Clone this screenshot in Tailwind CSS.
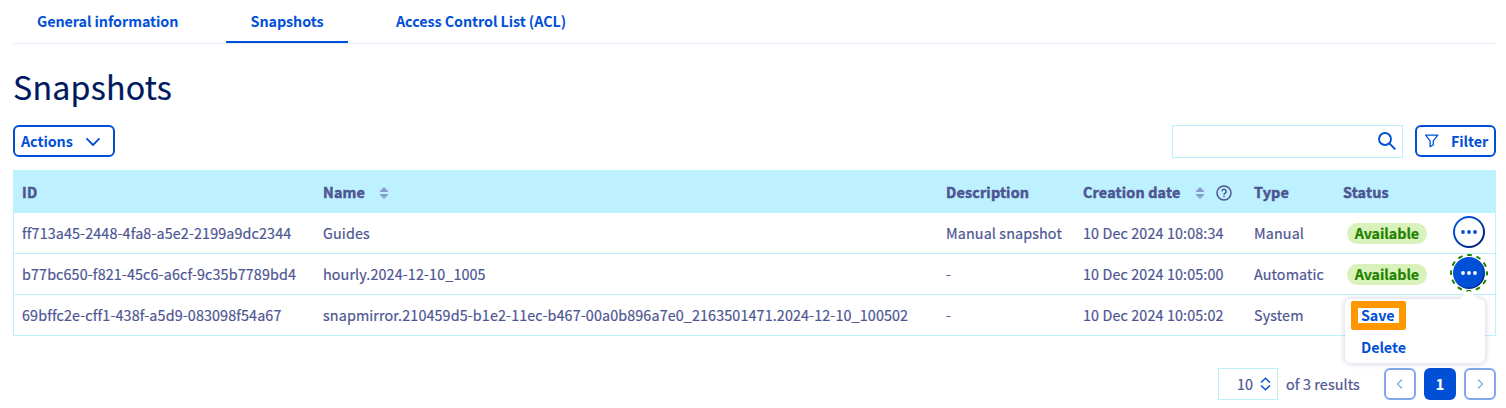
<!DOCTYPE html>
<html lang="en">
<head>
<meta charset="utf-8">
<title>Snapshots</title>
<script src="https://cdn.jsdelivr.net/npm/@tailwindcss/browser@4"></script>
</head>
<body class="relative h-[408px] w-[1506px] overflow-hidden bg-white pl-[13px] pr-[10px] font-['Noto_Sans_CJK_SC','Noto_Sans',sans-serif] text-[14.33px] leading-5 tracking-[0.122px] text-[#4d5592] [-webkit-text-stroke:0.2px]">
  <nav class="flex h-11 border-b border-[#e4f0fb] font-bold tracking-[-0.07px] text-[#0050d7] [-webkit-text-stroke:0px]">
    <a class="flex h-[43px] w-[189px] items-center pb-0.5 pl-6"><span>General information</span></a>
    <a class="ml-6 flex h-[43px] w-[122px] items-center justify-center border-b-2 border-[#0050d7]"><span>Snapshots</span></a>
    <a class="ml-6 flex h-[43px] items-center px-6 pb-0.5"><span>Access Control List (ACL)</span></a>
  </nav>

  <h1 class="mt-[22px] h-10 text-[32.2px] leading-10 tracking-[0.2px] text-[#00185e]">Snapshots</h1>

  <div class="mt-[19px] flex h-[33px] items-start justify-between font-bold tracking-[-0.07px] text-[#0050d7] [-webkit-text-stroke:0px]">
    <button class="flex h-8 w-[102px] items-center rounded-md border-2 border-[#0050d7] pl-1.5">
      <span class="w-[52px] text-left">Actions</span>
      <svg class="ml-3 mt-px h-4 w-4" viewBox="0 0 16 16" fill="none" stroke="currentColor" stroke-width="1.8" stroke-linecap="round" stroke-linejoin="round"><path d="M2 4.800 8 11l6-6.200"/></svg>
    </button>
    <div class="flex gap-3">
      <div class="flex h-[33px] w-[231px] items-center justify-end border border-[#bef1ff] pb-0.5 pr-1.5">
        <svg class="h-[18px] w-[18px]" viewBox="0 0 18 18" fill="none" stroke="currentColor" stroke-width="1.9"><circle cx="7" cy="7" r="6"/><path d="m11.3 11.3 6.1 6.1"/></svg>
      </div>
      <button class="flex h-8 w-[81px] items-center rounded-md border-2 border-[#0050d7] pl-2">
        <svg class="h-3.5 w-3.5" viewBox="0 0 14 14" fill="none" stroke="currentColor" stroke-width="1.3" stroke-linejoin="round"><path d="M.6 1.100h12.200L8.300 6.800v3.900l-3.200 2V6.800Z"/></svg>
        <span class="ml-3">Filter</span>
      </button>
    </div>
  </div>

  <table class="mt-3 w-[1483px] table-fixed border-separate border-spacing-0 text-left">
    <colgroup><col class="w-[302px]"><col class="w-[623px]"><col class="w-[137px]"><col class="w-[171px]"><col class="w-[89px]"><col class="w-[161px]"></colgroup>
    <thead>
      <tr class="h-[43px] bg-[#bef1ff] font-bold tracking-[0.18px] [-webkit-text-stroke:0.5px]">
        <th class="pl-[9px]">ID</th>
        <th class="pl-2"><div class="flex items-center"><span class="w-[41px]">Name</span><svg class="ml-4 mt-0.5 h-3 w-2 text-[#869ccb]" viewBox="0 0 8 12" fill="currentColor"><path d="M4 0 8 4v1H0V4ZM0 7h8v1l-4 4-4-4Z"/></svg></div></th>
        <th class="pl-2">Description</th>
        <th class="pl-2"><div class="flex items-center"><span class="w-[97px] whitespace-nowrap">Creation date</span><svg class="ml-4 mt-0.5 h-3 w-2 text-[#869ccb]" viewBox="0 0 8 12" fill="currentColor"><path d="M4 0 8 4v1H0V4ZM0 7h8v1l-4 4-4-4Z"/></svg><svg class="ml-[11.500px] mt-[3px] h-4 w-4" viewBox="0 0 16 16" fill="none" stroke="currentColor" stroke-width="1.5"><circle cx="8" cy="8" r="7"/><path d="M5.9 6.3a2.1 2.1 0 1 1 3.3 1.8C8.3 8.7 8 9 8 9.7M8 10.8v1.4"/></svg></div></th>
        <th class="pl-2">Type</th>
        <th class="pl-2">Status</th>
      </tr>
    </thead>
    <tbody>
      <tr class="h-[41px]">
        <td class="border-b border-l border-[#bef1ff] pl-2">ff713a45-2448-4fa8-a5e2-2199a9dc2344</td>
        <td class="border-b border-[#bef1ff] pl-2">Guides</td>
        <td class="whitespace-nowrap border-b border-[#bef1ff] pl-2">Manual snapshot</td>
        <td class="whitespace-nowrap border-b border-[#bef1ff] pl-2">10 Dec 2024 10:08:34</td>
        <td class="border-b border-[#bef1ff] pl-2">Manual</td>
        <td class="border-b border-r border-[#bef1ff] py-0 pl-3 pr-2.5">
          <div class="flex h-10 items-start justify-between">
            <span class="mt-2.5 flex h-[21px] w-20 items-center justify-center rounded-full bg-[#d9f1ba] pb-0.5 font-bold tracking-[-0.05px] text-[#1f8300]">Available</span>
            <svg class="mt-[3px] h-8 w-8" viewBox="0 0 32 32"><defs><linearGradient id="ring" x1="0" y1="0" x2="1" y2="1"><stop offset=".25" stop-color="#0050d7"/><stop offset=".85" stop-color="#00237a"/></linearGradient></defs><circle cx="16" cy="16" r="15" fill="#fff" stroke="url(#ring)" stroke-width="2"/><g fill="#0050d7"><circle cx="10" cy="16" r="1.9"/><circle cx="16" cy="16" r="1.9"/><circle cx="22" cy="16" r="1.9"/></g></svg>
          </div>
        </td>
      </tr>
      <tr class="h-[41px]">
        <td class="border-b border-l border-[#bef1ff] pl-2">b77bc650-f821-45c6-a6cf-9c35b7789bd4</td>
        <td class="border-b border-[#bef1ff] pl-2">hourly.2024-12-10_1005</td>
        <td class="border-b border-[#bef1ff] pl-2">-</td>
        <td class="whitespace-nowrap border-b border-[#bef1ff] pl-2">10 Dec 2024 10:05:00</td>
        <td class="border-b border-[#bef1ff] pl-2">Automatic</td>
        <td class="border-b border-r border-[#bef1ff] py-0 pl-3 pr-[7px]">
          <div class="flex h-10 items-start justify-between">
            <span class="mt-2.5 flex h-[21px] w-20 items-center justify-center rounded-full bg-[#d9f1ba] pb-0.5 font-bold tracking-[-0.05px] text-[#1f8300]">Available</span>
            <svg class="h-[38px] w-[38px]" viewBox="0 0 38 38"><defs><linearGradient id="disc" x1="0" y1="0" x2="1" y2="1"><stop offset=".4" stop-color="#0050d7"/><stop offset=".9" stop-color="#00237a"/></linearGradient></defs><circle cx="19" cy="19" r="18" fill="none" stroke="#1f8300" stroke-width="2" stroke-dasharray="4.7 4.725" stroke-dashoffset="2.35"/><circle cx="19" cy="19" r="16" fill="url(#disc)"/><circle cx="19" cy="19" r="14.5" fill="#0050d7"/><g fill="#fff"><circle cx="13" cy="19" r="1.9"/><circle cx="19" cy="19" r="1.9"/><circle cx="25" cy="19" r="1.9"/></g></svg>
          </div>
        </td>
      </tr>
      <tr class="h-[41px]">
        <td class="border-b border-l border-[#bef1ff] pl-2">69bffc2e-cff1-438f-a5d9-083098f54a67</td>
        <td class="border-b border-[#bef1ff] pl-2">snapmirror.210459d5-b1e2-11ec-b467-00a0b896a7e0_2163501471.2024-12-10_100502</td>
        <td class="border-b border-[#bef1ff] pl-2">-</td>
        <td class="whitespace-nowrap border-b border-[#bef1ff] pl-2">10 Dec 2024 10:05:02</td>
        <td class="border-b border-[#bef1ff] pl-2">System</td>
        <td class="border-b border-r border-[#bef1ff]"></td>
      </tr>
    </tbody>
  </table>

  <div class="mt-8 flex h-8 items-center justify-end">
    <div class="flex h-8 w-[60px] items-center border border-[#bef1ff] pl-[18px]">
      <span class="w-4">10</span>
      <svg class="ml-[7px] h-3.5 w-3 text-[#0050d7]" viewBox="0 0 12 14" fill="none" stroke="currentColor" stroke-width="1.4"><path d="M1 5.500 5.500 1.200l4.500 4.300M1 8.500 5.500 12.800l4.500-4.300"/></svg>
    </div>
    <span class="ml-2 w-[74px] whitespace-nowrap">of 3 results</span>
    <div class="ml-6 flex gap-2">
      <button class="flex h-8 w-8 items-center justify-center rounded-md border-2 border-[#80a8eb] text-[#80a8eb]"><svg class="h-3 w-3" viewBox="0 0 12 12" fill="none" stroke="currentColor" stroke-width="1.3"><path d="M8 1.500 3.500 6 8 10.500"/></svg></button>
      <button class="flex h-8 w-8 items-center justify-center rounded-md bg-[#0050d7] font-bold text-white">1</button>
      <button class="flex h-8 w-8 items-center justify-center rounded-md border-2 border-[#80a8eb] text-[#80a8eb]"><svg class="h-3 w-3" viewBox="0 0 12 12" fill="none" stroke="currentColor" stroke-width="1.3"><path d="M4 1.500 8.500 6 4 10.500"/></svg></button>
    </div>
  </div>

  <div class="absolute left-[1345px] top-[299px] h-16 w-[140px] rounded-md bg-white font-bold tracking-[-0.07px] text-[#0050d7] shadow-[0_0_6px_rgba(77,85,146,0.3)] [-webkit-text-stroke:0px]">
    <svg class="absolute left-[114px] top-[-8px] h-[9px] w-5" viewBox="0 0 20 9"><path d="M0 9 8 1q2-2 4 0l8 8Z" fill="#fff"/></svg>
    <div class="absolute left-1.5 top-0.5 h-[29px] w-[55px] rounded-[2px] border-7 border-[#ff9800]"></div>
    <a class="relative flex h-8 items-center pl-4"><span>Save</span></a>
    <a class="flex h-8 items-center pl-4"><span>Delete</span></a>
  </div>
</body>
</html>
